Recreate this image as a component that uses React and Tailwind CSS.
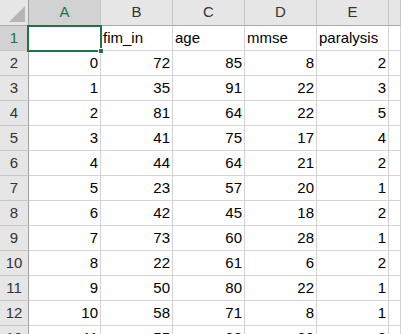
import React from 'react';

const columns = ['A', 'B', 'C', 'D', 'E'];

const rows = [
  ['', 'fim_in', 'age', 'mmse', 'paralysis'],
  [0, 72, 85, 8, 2],
  [1, 35, 91, 22, 3],
  [2, 81, 64, 22, 5],
  [3, 41, 75, 17, 4],
  [4, 44, 64, 21, 2],
  [5, 23, 57, 20, 1],
  [6, 42, 45, 18, 2],
  [7, 73, 60, 28, 1],
  [8, 22, 61, 6, 2],
  [9, 50, 80, 22, 1],
  [10, 58, 71, 8, 1],
  [11, 55, 82, 23, 2],
];

const ColHeader = ({ label, selected }) => (
  <div
    className={`h-[26px] flex items-center justify-center border-r border-b border-r-[#c6c6c6] border-b-[#ababab] text-[15px] ${
      selected ? 'bg-[#d2d2d2] text-[#217346]' : 'bg-[#e6e6e6] text-[#333333]'
    }`}
  >
    {label}
  </div>
);

const RowHeader = ({ label, selected }) => (
  <div
    className={`h-[25px] flex items-center justify-center border-r border-b border-r-[#9f9f9f] border-b-[#c6c6c6] text-[15px] ${
      selected ? 'bg-[#d2d2d2] text-[#217346]' : 'bg-[#e6e6e6] text-[#333333]'
    }`}
  >
    {label}
  </div>
);

const Cell = ({ value }) => {
  const isText = typeof value === 'string';
  return (
    <div
      className={`h-[25px] flex items-center px-[2px] border-r border-b border-[#d4d4d4] bg-white text-[15px] text-black whitespace-nowrap overflow-visible ${
        isText ? 'justify-start' : 'justify-end'
      }`}
    >
      {value}
    </div>
  );
};

export default function App() {
  return (
    <div
      className="relative w-[401px] h-[334px] overflow-hidden bg-white"
      style={{ fontFamily: '"Liberation Sans", Arial, sans-serif' }}
    >
      <div className="grid grid-cols-[29px_repeat(5,72px)_1fr]">
        {/* corner */}
        <div className="h-[26px] relative bg-[#e6e6e6] border-r border-b border-r-[#9f9f9f] border-b-[#ababab]">
          <svg className="absolute left-0 top-0" width="28" height="25" viewBox="0 0 28 25">
            <polygon points="9,22 25,22 25,6" fill="#b6b6b6" />
          </svg>
        </div>
        {columns.map((c, i) => (
          <ColHeader key={c} label={c} selected={i === 0} />
        ))}
        <ColHeader label="" />

        {rows.map((row, r) => (
          <React.Fragment key={r}>
            <RowHeader label={r + 1} selected={r === 0} />
            {row.map((v, c) => (
              <Cell key={c} value={v} />
            ))}
            <Cell value="" />
          </React.Fragment>
        ))}
      </div>

      {/* active cell A1 */}
      <div className="absolute left-[27px] top-[25px] w-[75px] h-[27px] border-2 border-[#217346] pointer-events-none" />
      <div className="absolute left-[98px] top-[48px] w-[6px] h-[6px] bg-[#217346] border border-white" />
    </div>
  );
}
